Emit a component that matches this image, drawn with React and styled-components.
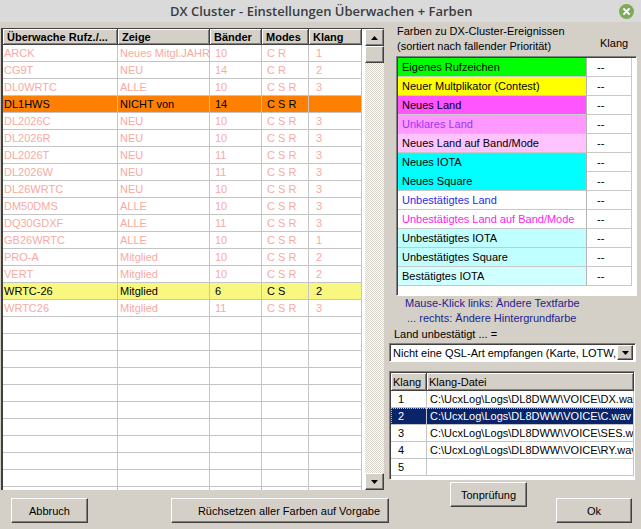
import styled, { createGlobalStyle } from "styled-components";

const GlobalStyle = createGlobalStyle`
  html, body { margin: 0; padding: 0; background: #d4d0c8; }
  body {
    font-family: "Liberation Sans", Arial, sans-serif;
    font-size: 11px;
    color: #000;
  }
  * { box-sizing: border-box; }
`;

const watchRows = [
  ["ARCK", "Neues Mitgl.JAHR", "10", "C R", "1"],
  ["CG9T", "NEU", "14", "C R", "2"],
  ["DL0WRTC", "ALLE", "10", "C S R", "3"],
  ["DL1HWS", "NICHT von", "14", "C S R", "", "#ff8000"],
  ["DL2026C", "NEU", "10", "C S R", "3"],
  ["DL2026R", "NEU", "10", "C S R", "3"],
  ["DL2026T", "NEU", "11", "C S R", "3"],
  ["DL2026W", "NEU", "11", "C S R", "3"],
  ["DL26WRTC", "NEU", "10", "C S R", "3"],
  ["DM50DMS", "ALLE", "10", "C S R", "3"],
  ["DQ30GDXF", "ALLE", "11", "C S R", "3"],
  ["GB26WRTC", "ALLE", "10", "C S R", "1"],
  ["PRO-A", "Mitglied", "10", "C S R", "2"],
  ["VERT", "Mitglied", "10", "C S R", "2"],
  ["WRTC-26", "Mitglied", "6", "C S", "2", "#f8f880"],
  ["WRTC26", "Mitglied", "11", "C S R", "3"],
];

const columns = [
  { title: "Überwache Rufz./...", width: 115, pad: 1 },
  { title: "Zeige", width: 92, pad: 2 },
  { title: "Bänder", width: 52, pad: 5 },
  { title: "Modes", width: 47, pad: 5 },
  { title: "Klang", width: 53, pad: 7 },
];

const colorRows = [
  { label: "Eigenes Rufzeichen", bg: "#00ff00", fg: "#000" },
  { label: "Neuer Multplikator (Contest)", bg: "#ffff00", fg: "#000" },
  { label: "Neues Land", bg: "#ff55ff", fg: "#000" },
  { label: "Unklares Land", bg: "#ff99ff", fg: "#9a33ff" },
  { label: "Neues Land auf Band/Mode", bg: "#ffc4ff", fg: "#000" },
  { label: "Neues IOTA", bg: "#00ffff", fg: "#000", joined: true },
  { label: "Neues Square", bg: "#00ffff", fg: "#000" },
  { label: "Unbestätigtes Land", bg: "#ffffff", fg: "#2a2aee" },
  { label: "Unbestätigtes Land auf Band/Mode", bg: "#ffffff", fg: "#ff22ee" },
  { label: "Unbestätigtes IOTA", bg: "#c0ffff", fg: "#000" },
  { label: "Unbestätigtes Square", bg: "#c0ffff", fg: "#000" },
  { label: "Bestätigtes IOTA", bg: "#d0ffff", fg: "#000" },
];

const soundRows = [
  ["1", "C:\\UcxLog\\Logs\\DL8DWW\\VOICE\\DX.wav"],
  ["2", "C:\\UcxLog\\Logs\\DL8DWW\\VOICE\\C.wav"],
  ["3", "C:\\UcxLog\\Logs\\DL8DWW\\VOICE\\SES.wav"],
  ["4", "C:\\UcxLog\\Logs\\DL8DWW\\VOICE\\RY.wav"],
  ["5", ""],
];

const Window = styled.div`
  width: 641px;
  height: 529px;
  display: flex;
  flex-direction: column;
  background: #d4d0c8;
  overflow: hidden;
`;

const TitleBar = styled.div`
  height: 22px;
  flex: none;
  display: flex;
  align-items: center;
  padding-left: 170px;
  background: #dadada;
  font-family: "Open Sans", "DejaVu Sans", sans-serif;
  font-weight: 600;
  font-size: 13px;
  color: #3c3c3c;
`;

const TitleText = styled.div`
  white-space: nowrap;
`;

const CloseButton = styled.div`
  margin-left: auto;
  margin-right: 7px;
  width: 15px;
  height: 15px;
  border-radius: 50%;
  background: #7eab58;
  display: flex;
  align-items: center;
  justify-content: center;
`;

const Body = styled.div`
  flex: 1;
  display: grid;
  grid-template-columns: 389px 252px;
`;

const LeftColumn = styled.div`
  display: flex;
  flex-direction: column;
  padding-top: 6px;
`;

const TableBox = styled.div`
  margin-left: 1px;
  width: 383px;
  height: 462px;
  display: flex;
  background: #fff;
  border-top: 1px solid #404040;
  border-left: 2px solid #404040;
  overflow: hidden;
`;

const Grid = styled.div`
  width: 359px;
  flex: none;
  display: flex;
  flex-direction: column;
  overflow: hidden;
`;

const Row = styled.div`
  display: flex;
  flex: none;
  height: ${(p) => (p.$header ? 16 : 17)}px;
  background: ${(p) => p.$bg || "#fff"};
  color: ${(p) => (p.$bg ? "#000" : "#f7aaa2")};
`;

const HeaderCell = styled.div`
  width: ${(p) => p.$w}px;
  flex: none;
  display: flex;
  align-items: center;
  padding-left: 4px;
  font-weight: bold;
  color: #000;
  background: #d4d0c8;
  border-right: 1px solid #404040;
  border-bottom: 1px solid #404040;
  box-shadow: inset 1px 1px #fff, inset -1px -1px #808080;
  white-space: nowrap;
  overflow: hidden;
`;

const Cell = styled.div`
  width: ${(p) => p.$w}px;
  flex: none;
  display: flex;
  align-items: center;
  padding-left: ${(p) => p.$pad}px;
  border-right: 1px solid #c4c4c4;
  border-bottom: 1px solid #c4c4c4;
  white-space: nowrap;
  overflow: hidden;
`;

const Scrollbar = styled.div`
  width: 19px;
  margin-left: 3px;
  display: flex;
  flex-direction: column;
`;

const ScrollTrack = styled.div`
  flex: 1;
  background: repeating-conic-gradient(#ffffff 0 25%, #d4d0c8 0 50%) 0 0 / 2px 2px;
`;

const ScrollButton = styled.div`
  height: 17px;
  flex: none;
  display: flex;
  align-items: center;
  justify-content: center;
  background: #d4d0c8;
  border: 1px solid;
  border-color: #fff #404040 #404040 #fff;
  box-shadow: inset -1px -1px #808080;
`;

const ButtonRow = styled.div`
  display: flex;
  margin-top: 8px;
  padding-left: 11px;
`;

const Button = styled.div`
  width: ${(p) => p.$w}px;
  height: 25px;
  margin-left: ${(p) => p.$ml || 0}px;
  display: flex;
  align-items: center;
  justify-content: center;
  padding-left: ${(p) => p.$pl || 0}px;
  background: #d4d0c8;
  border: 1px solid;
  border-color: #fff #404040 #404040 #fff;
  box-shadow: inset -1px -1px #808080;
  white-space: nowrap;
`;

const RightColumn = styled.div`
  display: flex;
  flex-direction: column;
`;

const PanelHeader = styled.div`
  display: grid;
  grid-template-columns: 198px 1fr;
  padding-left: 8px;
  padding-top: 2px;
`;

const HeaderLines = styled.div`
  line-height: 15px;
  white-space: nowrap;
`;

const KlangLabel = styled.div`
  align-self: end;
  margin-bottom: 5px;
  padding-left: 5px;
`;

const ColorBox = styled.div`
  margin: 2px 0 0 7px;
  width: 241px;
  height: 240px;
  background: #fff;
  border: 1px solid;
  border-color: #808080 #fff #fff #808080;
`;

const ColorInner = styled.div`
  height: 100%;
  border-top: 1px solid #404040;
  border-left: 1px solid #404040;
`;

const ColorRow = styled.div`
  display: grid;
  grid-template-columns: 189px 45px;
  height: 19px;
`;

const ColorLabel = styled.div`
  display: flex;
  align-items: center;
  padding-left: 4px;
  background: ${(p) => p.$bg};
  color: ${(p) => p.$fg};
  border-bottom: 1px solid ${(p) => (p.$joined ? p.$bg : "#c8c8c8")};
  border-right: 1px solid #b4b4b4;
  white-space: nowrap;
`;

const ColorSound = styled.div`
  display: flex;
  align-items: center;
  padding-left: 10px;
  border-bottom: 1px solid #c8c8c8;
  border-right: 1px solid #c8c8c8;
`;

const Hint = styled.div`
  color: #1e1e8c;
  line-height: 15px;
  padding-left: ${(p) => p.$pl}px;
  white-space: nowrap;
`;

const FieldLabel = styled.div`
  padding-left: 5px;
  margin-top: 1px;
  line-height: 15px;
`;

const Select = styled.div`
  margin-top: 1px;
  width: 247px;
  height: 19px;
  display: flex;
  align-items: center;
  padding: 0 1px 0 3px;
  background: #fff;
  border: 1px solid;
  border-color: #808080 #fff #fff #808080;
  box-shadow: inset 1px 1px #404040;
  white-space: nowrap;
  overflow: hidden;
`;

const SelectText = styled.div`
  flex: 1;
  overflow: hidden;
`;

const DropButton = styled(ScrollButton)`
  width: 16px;
  height: 15px;
  margin-right: 1px;
`;

const SoundBox = styled.div`
  margin-top: 9px;
  width: 246px;
  height: 109px;
  background: #fff;
  border: 1px solid;
  border-color: #808080 #fff #fff #808080;
  box-shadow: inset 1px 1px #404040;
  padding: 1px 0 0 1px;
  overflow: hidden;
`;

const SoundRow = styled.div`
  display: grid;
  grid-template-columns: 36px 1fr;
  height: ${(p) => (p.$header ? 18 : 17)}px;
  background: ${(p) => (p.$selected ? "#0a246a" : "transparent")};
  color: ${(p) => (p.$selected ? "#fff" : "#000")};
  outline: ${(p) => (p.$selected ? "1px dotted #c0c0c0" : "none")};
  outline-offset: -1px;
`;

const SoundHead = styled(HeaderCell)`
  width: auto;
  font-weight: normal;
  padding-left: 2px;
`;

const SoundCell = styled.div`
  display: flex;
  align-items: center;
  padding-left: ${(p) => p.$pad}px;
  border-right: 1px solid #c4c4c4;
  border-bottom: 1px solid #c4c4c4;
  white-space: nowrap;
  overflow: hidden;
`;

const BottomRight = styled.div`
  display: flex;
  height: 41px;
  margin-top: 2px;
  padding-left: 61px;
`;

const Tonpruefung = styled(Button)`
  align-self: flex-start;
`;

const OkButton = styled(Button)`
  align-self: flex-end;
  margin-left: auto;
  margin-right: 9px;
`;

const Triangle = ({ down }) => (
  <svg width="7" height="4" viewBox="0 0 7 4">
    <polygon points={down ? "0,0 7,0 3.5,4" : "0,4 7,4 3.5,0"} fill="#000" />
  </svg>
);

export default function App() {
  const emptyRows = Array.from({ length: 12 });
  return (
    <Window>
      <GlobalStyle />
      <TitleBar>
        <TitleText>DX Cluster - Einstellungen Überwachen + Farben</TitleText>
        <CloseButton>
          <svg width="7" height="7" viewBox="0 0 7 7">
            <path d="M1 1 L6 6 M6 1 L1 6" stroke="#fff" strokeWidth="1.8" strokeLinecap="round" />
          </svg>
        </CloseButton>
      </TitleBar>
      <Body>
        <LeftColumn>
          <TableBox>
            <Grid>
              <Row $header>
                {columns.map((c) => (
                  <HeaderCell key={c.title} $w={c.width}>
                    {c.title}
                  </HeaderCell>
                ))}
              </Row>
              {watchRows.map((r) => (
                <Row key={r[0]} $bg={r[5]}>
                  {columns.map((c, i) => (
                    <Cell key={c.title} $w={c.width} $pad={c.pad}>
                      {r[i]}
                    </Cell>
                  ))}
                </Row>
              ))}
              {emptyRows.map((_, k) => (
                <Row key={"e" + k}>
                  {columns.map((c) => (
                    <Cell key={c.title} $w={c.width} $pad={c.pad} />
                  ))}
                </Row>
              ))}
            </Grid>
            <Scrollbar>
              <ScrollButton>
                <Triangle />
              </ScrollButton>
              <ScrollButton />
              <ScrollTrack />
              <ScrollButton>
                <Triangle down />
              </ScrollButton>
            </Scrollbar>
          </TableBox>
          <ButtonRow>
            <Button $w={77}>Abbruch</Button>
            <Button $w={218} $ml={83} $pl={18}>
              Rüchsetzen aller Farben auf Vorgabe
            </Button>
          </ButtonRow>
        </LeftColumn>

        <RightColumn>
          <PanelHeader>
            <HeaderLines>
              Farben zu DX-Cluster-Ereignissen
              <br />
              (sortiert nach fallender Priorität)
            </HeaderLines>
            <KlangLabel>Klang</KlangLabel>
          </PanelHeader>
          <ColorBox>
            <ColorInner>
              {colorRows.map((c) => (
                <ColorRow key={c.label}>
                  <ColorLabel $bg={c.bg} $fg={c.fg} $joined={c.joined}>
                    {c.label}
                  </ColorLabel>
                  <ColorSound>--</ColorSound>
                </ColorRow>
              ))}
            </ColorInner>
          </ColorBox>
          <Hint $pl={16}>Mause-Klick links: Ändere Textfarbe</Hint>
          <Hint $pl={18}>... rechts: Ändere Hintergrundfarbe</Hint>
          <FieldLabel>Land unbestätigt ... =</FieldLabel>
          <Select>
            <SelectText>Nicht eine QSL-Art empfangen (Karte, LOTW, eQSL)</SelectText>
            <DropButton>
              <Triangle down />
            </DropButton>
          </Select>
          <SoundBox>
            <SoundRow $header>
              <SoundHead>Klang</SoundHead>
              <SoundHead>Klang-Datei</SoundHead>
            </SoundRow>
            {soundRows.map((s) => (
              <SoundRow key={s[0]} $selected={s[0] === "2"}>
                <SoundCell $pad={7}>{s[0]}</SoundCell>
                <SoundCell $pad={3}>{s[1]}</SoundCell>
              </SoundRow>
            ))}
          </SoundBox>
          <BottomRight>
            <Tonpruefung $w={77}>Tonprüfung</Tonpruefung>
            <OkButton $w={76}>Ok</OkButton>
          </BottomRight>
        </RightColumn>
      </Body>
    </Window>
  );
}
